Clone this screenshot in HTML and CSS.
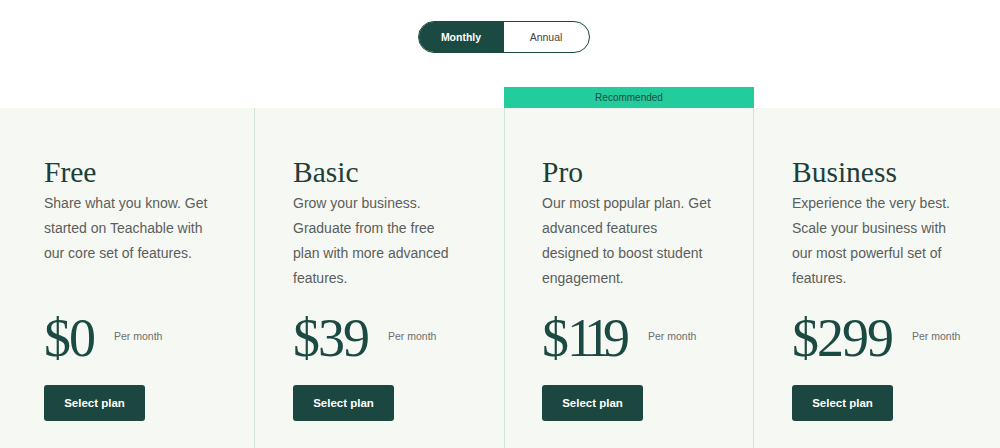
FILE: index.html
```html
<!DOCTYPE html>
<html lang="en">
<head>
<meta charset="utf-8">
<title>Pricing</title>
<link rel="stylesheet" href="styles.css">
</head>
<body>
<div class="toggle-wrap">
  <div class="toggle">
    <span class="seg seg-active">Monthly</span>
    <span class="seg">Annual</span>
  </div>
</div>
<div class="plans">
  <div class="plan plan-first">
    <div class="plan-body">
      <h2 class="plan-name">Free</h2>
      <p class="plan-desc">Share what you know. Get started on Teachable with our core set of features.</p>
      <div class="price-row"><span class="price">$0</span><span class="per">Per month</span></div>
      <button class="select">Select plan</button>
    </div>
  </div>
  <div class="plan">
    <div class="plan-body">
      <h2 class="plan-name">Basic</h2>
      <p class="plan-desc">Grow your business. Graduate from the free plan with more advanced features.</p>
      <div class="price-row"><span class="price">$39</span><span class="per">Per month</span></div>
      <button class="select">Select plan</button>
    </div>
  </div>
  <div class="plan plan-pro">
    <div class="badge">Recommended</div>
    <div class="plan-body">
      <h2 class="plan-name">Pro</h2>
      <p class="plan-desc">Our most popular plan. Get advanced features designed to boost student engagement.</p>
      <div class="price-row"><span class="price">$<span class="one">1</span><span class="one">1</span>9</span><span class="per">Per month</span></div>
      <button class="select">Select plan</button>
    </div>
  </div>
  <div class="plan">
    <div class="plan-body">
      <h2 class="plan-name">Business</h2>
      <p class="plan-desc">Experience the very best. Scale your business with our most powerful set of features.</p>
      <div class="price-row"><span class="price">$299</span><span class="per">Per month</span></div>
      <button class="select">Select plan</button>
    </div>
  </div>
</div>
</body>
</html>
```
FILE: styles.css
```css
* { box-sizing: border-box; }
html, body { margin: 0; padding: 0; background: #ffffff; }
body {
  font-family: "Liberation Sans", Arial, sans-serif;
  color: #1b4a42;
  overflow: hidden;
  height: 448px;
}
.toggle-wrap {
  display: flex;
  justify-content: center;
  padding-top: 21px;
  height: 87px;
  padding-left: 7px;
}
.toggle {
  display: flex;
  width: 172px;
  height: 32px;
  border: 1px solid #1b4a42;
  border-radius: 16px;
  overflow: hidden;
}
.seg {
  flex: 1;
  display: flex;
  align-items: center;
  justify-content: center;
  font-size: 10.5px;
  color: #444;
}
.seg-active {
  background: #1b4a42;
  color: #fff;
  font-weight: bold;
}
.plans {
  display: flex;
  align-items: flex-end;
  padding-left: 5px;
  height: 361px;
  background: linear-gradient(to bottom, #ffffff 0, #ffffff 21px, #f6f8f3 21px);
}
.plan {
  width: 249px;
  flex: none;
  height: 340px;
  display: flex;
  flex-direction: column;
}
.plan-first { border-right: 1px solid #d4e4da; width: 250px; }
.plan-pro {
  height: 361px;
  border-left: 1px solid #d4e4da;
  border-right: 1px solid #d4e4da;
  width: 250px;
}
.badge {
  height: 21px;
  background: #22cc9b;
  color: #1b4a42;
  font-size: 10px;
  display: flex;
  align-items: center;
  justify-content: center;
  margin: 0 -1px;
}
.plan-body {
  padding: 48px 0 0 38px;
}
.plan-pro .plan-body { padding-left: 37px; }
.plan-first .plan-body { padding-left: 39px; }
.plan-name {
  margin: 0;
  font-family: "Liberation Serif", "Times New Roman", serif;
  font-weight: normal;
  font-size: 29.5px;
  line-height: 33px;
  color: #1d3f3a;
}
.plan-desc {
  margin: 2px 0 0;
  width: 171px;
  font-size: 14px;
  line-height: 25px;
  color: #5a5e5c;
  height: 100px;
}
.price-row {
  display: flex;
  align-items: flex-start;
  margin-top: 20px;
  height: 67px;
}
.price {
  font-family: "Liberation Serif", "Times New Roman", serif;
  font-size: 54px;
  line-height: 54px;
  letter-spacing: -2px;
  color: #1b4a42;
}
.one { letter-spacing: -8px; }
.per {
  font-size: 10.5px;
  color: #6b6f6d;
  margin-left: 20px;
  margin-top: 19px;
}
.select {
  margin-top: 7px;
  width: 101px;
  height: 36px;
  background: #1b4740;
  color: #fff;
  border: none;
  border-radius: 3px;
  font-family: "Liberation Sans", Arial, sans-serif;
  font-weight: bold;
  font-size: 11.5px;
}
```
